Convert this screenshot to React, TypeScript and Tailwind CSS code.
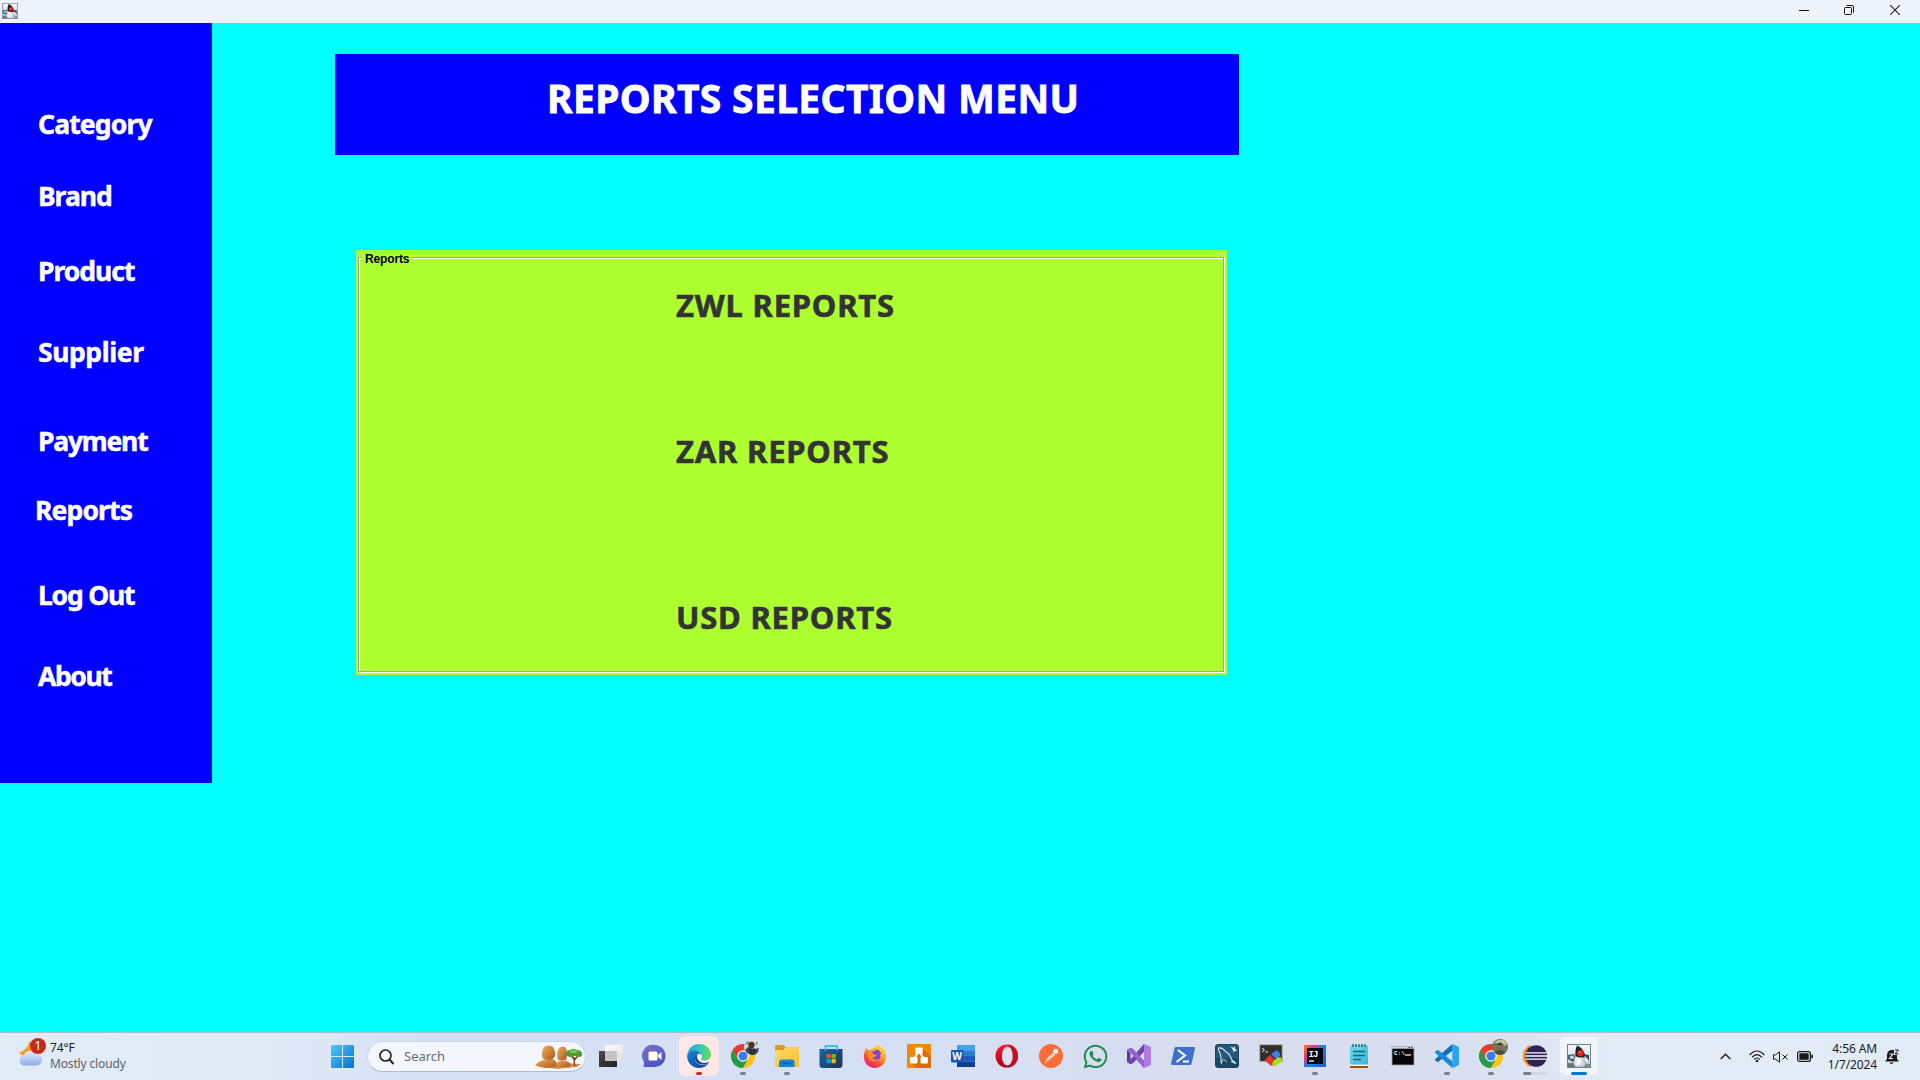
import React from "react";
import { FaWhatsapp } from "react-icons/fa";

type IconProps = { children: React.ReactNode };

function Icon({ children }: IconProps) {
  return (
    <svg width="24" height="24" viewBox="0 0 24 24" className="block overflow-visible">
      {children}
    </svg>
  );
}

function Duke({ size }: { size: number }) {
  return (
    <svg width={size} height={size} viewBox="0 0 24 24" className="block">
      <defs>
        <linearGradient id="dukeBg" x1="0" y1="0" x2="0" y2="1">
          <stop offset="0" stopColor="#f6f8fa" />
          <stop offset="1" stopColor="#c3cdd8" />
        </linearGradient>
        <linearGradient id="dukeBody" x1="0" y1="0" x2="1" y2="0">
          <stop offset="0" stopColor="#c9ccce" />
          <stop offset=".4" stopColor="#ffffff" />
          <stop offset="1" stopColor="#b4b8bb" />
        </linearGradient>
      </defs>
      <rect x=".5" y=".5" width="23" height="23" fill="url(#dukeBg)" stroke="#6c8299" />
      <path d="M1 11l6-1 2 5-3 3-5-3z" fill="#47596a" />
      <path d="M2.500 12l4-.5 1 3-4 .5z" fill="#b7d3e6" />
      <path d="M16 10l6 1v6l-5-2z" fill="#3f4d5a" />
      <path d="M1 19h5l3 4H1z" fill="#6c747b" />
      <path d="M18 20h5v3h-7z" fill="#858d94" />
      <path d="M6.500 20c0-4 1.500-7 3-9h7c1.500 3 2.500 6 2.500 10l-3 2-3-2-4 2z" fill="url(#dukeBody)" stroke="#8a8f94" strokeWidth=".5" />
      <path d="M17.500 12l4 4-1 3.500-3-3z" fill="#f5f5f5" stroke="#8a8f94" strokeWidth=".4" />
      <path d="M10 1.500C8.500 5 8 9 8.500 12l3 1.500h5L18 11C17 7 14 3 10 1.500z" fill="#1b1d20" />
      <circle cx="13.500" cy="9.300" r="3.200" fill="#e81c1c" />
      <circle cx="12.700" cy="8.300" r="1" fill="#ff7070" />
    </svg>
  );
}

const chromeArt = (
  <>
    <circle cx="12" cy="12" r="12" fill="#fbc116" />
    <path d="M1.600 6A12 12 0 0 1 22.400 6H12L6.800 15z" fill="#e33b2e" />
    <path d="M1.600 6A12 12 0 0 0 12 24l5.200-9L12 12 6.800 15z" fill="#229a48" />
    <path d="M22.400 6A12 12 0 0 1 12 24l5.200-9A6 6 0 0 0 12 6z" fill="#fcc31b" />
    <circle cx="12" cy="12" r="5.800" fill="#fff" />
    <circle cx="12" cy="12" r="4.600" fill="#3b7ded" />
  </>
);

const icons: { name: string; art: React.ReactNode; mark?: string; cell?: string }[] = [
  {
    name: "Task view",
    art: (
      <Icon>
        <defs>
          <linearGradient id="tv1" x1="0" y1="0" x2="1" y2="1">
            <stop offset="0" stopColor="#4b4b4b" />
            <stop offset="1" stopColor="#1f1f1f" />
          </linearGradient>
          <linearGradient id="tv2" x1="0" y1="0" x2="1" y2="1">
            <stop offset="0" stopColor="#fff" />
            <stop offset="1" stopColor="#dcdcdc" />
          </linearGradient>
        </defs>
        <rect x="0" y="7" width="18" height="16" fill="url(#tv1)" />
        <rect x="6" y="1" width="18" height="16" fill="url(#tv2)" />
        <rect x="6" y="7" width="12" height="10" fill="#c3c3c5" />
      </Icon>
    ),
  },
  {
    name: "Chat",
    art: (
      <Icon>
        <defs>
          <linearGradient id="chat" x1="0" y1="0" x2=".6" y2="1">
            <stop offset="0" stopColor="#8f6bb0" />
            <stop offset=".5" stopColor="#6263c9" />
            <stop offset="1" stopColor="#4c50c4" />
          </linearGradient>
        </defs>
        <path d="M12 1a11 11 0 1 1-1 22H.5l.5-5A11 11 0 0 1 12 1z" fill="url(#chat)" />
        <rect x="5.500" y="7.500" width="9" height="9" rx="1.500" fill="#fff" />
        <path d="M15 11l3.500-3v8L15 13z" fill="#fff" />
      </Icon>
    ),
  },
  {
    name: "Edge",
    mark: "w-1.5 bg-[#c42b1c]",
    cell: "bg-[#fde7e9]",
    art: (
      <Icon>
        <defs>
          <linearGradient id="edge1" x1="0" y1=".3" x2="1" y2=".4">
            <stop offset="0" stopColor="#209fd8" />
            <stop offset=".5" stopColor="#30c6c4" />
            <stop offset="1" stopColor="#68dd55" />
          </linearGradient>
          <linearGradient id="edge2" x1="0" y1="0" x2=".7" y2="1">
            <stop offset="0" stopColor="#1783cf" />
            <stop offset="1" stopColor="#104ca0" />
          </linearGradient>
        </defs>
        <path d="M.2 11C1 4.500 6 0 12.200 0 19 0 24 5 24 10.500c0 3.500-2.500 6-6 6-2.800 0-4-1-3.700-2 .6-1.200.9-2 .4-3.500C13.500 7.500 10 6 6.500 6.500 3.500 7 1.200 8.600.2 11z" fill="url(#edge1)" />
        <path d="M.2 11C2 7 7 5.300 10.500 7c2 1 3.300 2.300 4 3.800-3-2.400-6.500-.5-6.500 3.500 0 5.500 6.500 9 13.500 5C19.500 22.300 16 24 12 24 5 24-.4 18.200.2 11z" fill="url(#edge2)" />
        <path d="M8 13c-.8 6 6.500 10 13.700 6 .6-.4.200-1-.5-.7-5 2.200-11.700-.8-11.200-6.300.2-1 .5-1.500 1-2-1.600.4-2.700 1.500-3 3z" fill="#0b4c8e" />
      </Icon>
    ),
  },
  {
    name: "Chrome",
    mark: "w-1.5 bg-[#7b8088]",
    art: (
      <Icon>
        {chromeArt}
        <circle cx="21" cy="3" r="8" fill="#d9dde0" />
        <path d="M14 6l2 3 4 2h4l3-3 1-4-4 1-7-2z" fill="#3f4a52" />
        <circle cx="20.500" cy="1" r="3.200" fill="#4a3428" />
        <path d="M18 4.500l3 1 3-1.500 1 4-4 2.500-3-2z" fill="#29303c" />
        <path d="M14 0l3-3 1 1-2 3zM25-3l2 3-2 1z" fill="#76859b" />
      </Icon>
    ),
  },
  {
    name: "File Explorer",
    mark: "w-1.5 bg-[#7b8088]",
    art: (
      <Icon>
        <defs>
          <linearGradient id="folder" x1="0" y1="0" x2="1" y2="1">
            <stop offset="0" stopColor="#ffdc6b" />
            <stop offset="1" stopColor="#f9bc2c" />
          </linearGradient>
        </defs>
        <path d="M0 2.500Q0 1 1.500 1H8l2.500 2H23q1 0 1 1v4H0z" fill="#dc9b14" />
        <path d="M0 6h8l3-3h12q1 0 1 1v18q0 1-1 1H1q-1 0-1-1z" fill="url(#folder)" />
        <path d="M4 23v-5q0-2.500 2.500-2.500h10.500q2.500 0 2.500 2.500v5z" fill="#1683d4" />
        <rect x="7" y="18.500" width="9.500" height="1.700" rx=".8" fill="#0b5ba5" />
      </Icon>
    ),
  },
  {
    name: "Store",
    art: (
      <Icon>
        <defs>
          <linearGradient id="store" x1="0" y1="0" x2="1" y2="1">
            <stop offset="0" stopColor="#14669f" />
            <stop offset="1" stopColor="#223257" />
          </linearGradient>
        </defs>
        <path d="M6.500 7V2H18v5" fill="none" stroke="#38c2ef" strokeWidth="2" />
        <path d="M.5 5h23v15.500q0 3.500-3.500 3.500H4Q.5 24 .5 20.500z" fill="url(#store)" />
        <path d="M5.600 5h1.800v1.500H5.600zM17 5h1.800v1.500H17z" fill="#38c2ef" />
        <path d="M7.500 10h4.200v4.200H7.500z" fill="#f25022" />
        <path d="M12.500 10h4.200v4.200h-4.200z" fill="#7fba00" />
        <path d="M7.500 15h4.200v4.200H7.500z" fill="#00a4ef" />
        <path d="M12.500 15h4.200v4.200h-4.200z" fill="#ffb900" />
      </Icon>
    ),
  },
  {
    name: "Firefox",
    art: (
      <Icon>
        <defs>
          <linearGradient id="ff" x1=".8" y1="0" x2=".2" y2="1">
            <stop offset="0" stopColor="#fff046" />
            <stop offset=".4" stopColor="#ffa326" />
            <stop offset=".7" stopColor="#fc4a3f" />
            <stop offset="1" stopColor="#e01475" />
          </linearGradient>
        </defs>
        <path d="M3.200 3.500c.3 1.200.8 2 1.600 2.500 1-.5 2-.4 3 0 1-1.500 2.500-2 4.200-2-.2-.8 2-2.500 3.500-4.500.5 2 1.500 3 2.500 4 .5.300.8.500 1 .8V3c2.700 2 4.200 6 4.200 9.500C23.200 19 18.200 24 12 24S.8 19 .8 12.500c0-3 1-6 2.400-9z" fill="url(#ff)" />
        <circle cx="12" cy="12.200" r="5.300" fill="#7a42d5" />
        <path d="M5 9c2-1 4-1 6 1 1 1 2 1 3 1-1 2.500-3 2-4.500 2.500 1 2.500 4 3 7 .5-1 4-8 5-10.500.5C5 12.500 4.500 11 5 9z" fill="#ff8b25" />
        <path d="M12 6c3-1 6 1 6.500 5-2-2-2.500-2-4.500-3z" fill="#6547cf" />
      </Icon>
    ),
  },
  {
    name: "Diagrams",
    art: (
      <Icon>
        <rect width="24" height="24" fill="#f08705" />
        <path d="M15 4l9 8v12H10l-6-5z" fill="#df6c0c" />
        <path d="M11 9l-5 7M13 9l5 7" stroke="#fff" strokeWidth="2" />
        <rect x="8.300" y="3.500" width="7.400" height="6.500" rx="1" fill="#fff" />
        <rect x="3" y="13" width="7.500" height="6.500" rx="1" fill="#fff" />
        <rect x="13.500" y="13" width="7.500" height="6.500" rx="1" fill="#fff" />
      </Icon>
    ),
  },
  {
    name: "Word",
    art: (
      <Icon>
        <path d="M6 1h18v6H6z" fill="#3fa3ec" />
        <path d="M6 7h18v5H6z" fill="#2b7cd3" />
        <path d="M6 12h18v5.500H6z" fill="#185abd" />
        <path d="M6 17.500h18V23H6z" fill="#103f91" />
        <rect x="0" y="6" width="12.500" height="12.500" rx="1" fill="#1a56b4" />
        <text x="6.200" y="16" textAnchor="middle" fill="#fff" className="font-['Noto_Sans'] text-[10px] font-bold">W</text>
      </Icon>
    ),
  },
  {
    name: "Opera",
    art: (
      <Icon>
        <defs>
          <linearGradient id="op" x1="0" y1="0" x2="0" y2="1">
            <stop offset="0" stopColor="#ff1b2d" />
            <stop offset="1" stopColor="#a70014" />
          </linearGradient>
        </defs>
        <ellipse cx="11.800" cy="12" rx="11.300" ry="11.500" fill="url(#op)" />
        <path d="M12 .5c7 0 11 5.500 11 11.500s-4 11.500-11 11.500c5-1 6-7 6-11.500S17 1.500 12 .5z" fill="#c4101f" />
        <ellipse cx="12.300" cy="12" rx="5.400" ry="9.600" fill="#dbe1f1" />
      </Icon>
    ),
  },
  {
    name: "Postman",
    art: (
      <Icon>
        <circle cx="12" cy="12" r="12" fill="#ff6c37" />
        <path d="M5.500 19.500l2.500-5 6-5.500 2 2-6.500 5.500z" fill="#fff" />
        <circle cx="16.700" cy="7.200" r="2.500" fill="#fff" />
        <path d="M5.500 19l8.500-8" stroke="#ff6c37" strokeWidth=".8" />
      </Icon>
    ),
  },
  { name: "WhatsApp", art: <FaWhatsapp className="h-[27px] w-[27px] text-[#1c8c50]" /> },
  {
    name: "Visual Studio",
    art: (
      <Icon>
        <path d="M17 0l7 3v18l-7 3z" fill="#b07be6" />
        <path d="M17 0L3.500 15.500 0 17.500V7l1-1 2 1.500L17 24v-7L6 5 3.500 4 0 6v12l3.500 2L6 19 17 7.500z" fill="#63409c" />
        <path d="M17 0v7.500L6 19l-2.500 1L0 18l3-1z" fill="#7443b0" />
        <path d="M6 5l11 12v7L3 8 0 6l3.500-2z" fill="#9563d4" />
        <path d="M0 6l3.500 3v6.500L0 18z" fill="#5b3a92" />
      </Icon>
    ),
  },
  {
    name: "PowerShell",
    art: (
      <Icon>
        <path d="M5 3h18q1.200 0 1 1.200l-3.500 15.600q-.3 1.200-1.500 1.200H1q-1.200 0-1-1.200L3.500 4.200Q3.800 3 5 3z" fill="#3f70c9" />
        <path d="M7 6l7 5.500L5.500 18" fill="none" stroke="#fff" strokeWidth="2.200" />
        <path d="M12 17.500h6" stroke="#fff" strokeWidth="2" />
      </Icon>
    ),
  },
  {
    name: "Workbench",
    art: (
      <Icon>
        <rect x=".5" y=".5" width="23" height="23" rx="2.500" fill="#21587c" stroke="#1b4660" />
        <path d="M1 14h22v7q0 2-2 2H3q-2 0-2-2z" fill="#1c4868" />
        <path d="M6.500 19.500c-1.500-3 .5-5.500-1-9C4.500 8 3 6 3.500 4c3-.8 5 .8 7 3.500 3 1.500 5 4.500 6 8l4.500 4-5-2" fill="none" stroke="#dbe8f0" strokeWidth="1.100" />
        <path d="M6.500 19.500c.2-2 1-3.500 2.200-4.500 1.500 1 2 2.500 3 3" fill="none" stroke="#dbe8f0" strokeWidth="1" />
        <path d="M15.500 2.500l3 1.200.8-1.700 1 3 2 1.700-2.300.2-1.300 1.600-.7-2.500z" fill="#e8eef2" />
      </Icon>
    ),
  },
  {
    name: "Git terminal",
    art: (
      <Icon>
        <rect x=".6" y=".6" width="22.800" height="17" fill="#2e2e2e" stroke="#b6b6ae" strokeWidth="1.200" />
        <path d="M3 4l2.500 2L3 8M6.500 8H9" fill="none" stroke="#fff" strokeWidth="1" />
        <path d="M5.500 16l5.500-5 7 7-2.500 3.500h-4z" fill="#e5352c" />
        <path d="M12 10l6-4 3.500 4-2 5-3.500-1z" fill="#3c7ff0" />
        <path d="M14.500 17l3.500-3 4-1 1 4-6.500 5.500-3.500-2z" fill="#a5e316" />
      </Icon>
    ),
  },
  {
    name: "IntelliJ",
    mark: "w-1.5 bg-[#7b8088]",
    art: (
      <Icon>
        <defs>
          <linearGradient id="ij" x1="0" y1="0" x2="1" y2=".8">
            <stop offset="0" stopColor="#fc801d" />
            <stop offset=".3" stopColor="#e8347a" />
            <stop offset=".55" stopColor="#1580f2" />
            <stop offset="1" stopColor="#245edc" />
          </linearGradient>
        </defs>
        <rect x="1" y="1" width="22" height="22" fill="url(#ij)" />
        <rect x="4" y="4" width="16" height="16" fill="#080610" />
        <text x="5.500" y="12.500" fill="#fff" className="font-['Liberation_Mono'] text-[9px] font-bold tracking-[-1px]">IJ</text>
        <path d="M6 17h5" stroke="#fff" strokeWidth="1.300" />
      </Icon>
    ),
  },
  {
    name: "Notepad",
    art: (
      <Icon>
        <defs>
          <linearGradient id="np" x1="0" y1="0" x2="1" y2="1">
            <stop offset="0" stopColor="#70dcec" />
            <stop offset="1" stopColor="#38b4d8" />
          </linearGradient>
        </defs>
        <path d="M3 20h18v4H3z" fill="#a9500d" />
        <path d="M3 20h18v2H3z" fill="#f6efe8" />
        <rect x="3" y="1.500" width="18" height="19" rx="1" fill="url(#np)" />
        <path d="M6 0v3M9 0v3M12 0v3M15 0v3M18 0v3" stroke="#155a73" strokeWidth="1.300" />
        <path d="M6 7.500h12M6 11.500h12M6 15.500h8" stroke="#12637e" strokeWidth="1.300" />
      </Icon>
    ),
  },
  {
    name: "Command Prompt",
    art: (
      <Icon>
        <rect x="1" y="2.500" width="22" height="18.500" fill="#070707" stroke="#9fa2a6" strokeWidth=".8" />
        <path d="M1 2.500h22v2.200H1z" fill="#d4d7da" />
        <path d="M17.500 3.500h1.500M20 3.500h1.500" stroke="#444" />
        <text x="3" y="11" fill="#fff" className="font-['Liberation_Mono'] text-[6px] font-bold">C:\</text>
        <path d="M14 11h6" stroke="#fff" strokeWidth="1.200" />
      </Icon>
    ),
  },
  {
    name: "VS Code",
    mark: "w-1.5 bg-[#7b8088]",
    art: (
      <Icon>
        <path d="M17.300 0L24 3v18l-6.700 3z" fill="#2aa6ee" />
        <path d="M17.300 0v6.800L2.800 18.300 0 16.200v-1z" fill="#0e70b8" />
        <path d="M17.300 24v-6.800L2.800 5.700 0 7.800v1z" fill="#1a8ad6" />
      </Icon>
    ),
  },
  {
    name: "Chrome profile",
    mark: "w-1.5 bg-[#7b8088]",
    art: (
      <Icon>
        {chromeArt}
        <circle cx="21" cy="3" r="8" fill="#6f7a55" />
        <path d="M15-1l4-3 6 0 3 4-2 2-4-2z" fill="#b9c49b" />
        <circle cx="21" cy="2.500" r="3.200" fill="#8b6750" />
        <path d="M17.500 1q3.500-5 7 0z" fill="#30363a" />
        <path d="M15.500 8.500q5.500-5 11 0-5.500 4.500-11 0z" fill="#424d4c" />
      </Icon>
    ),
  },
  {
    name: "Eclipse",
    mark: "w-6 bg-[linear-gradient(90deg,#7b8088_33%,#d3dae5_33%)]",
    art: (
      <Icon>
        <path d="M8 .8A11.700 11.700 0 0 0 8 23.200L7 20Q3 12 7 4z" fill="#f7941e" />
        <circle cx="13.200" cy="12" r="10.800" fill="#2c2255" />
        <path d="M3 8.800h20.500M2.500 12H24M3 15.200h20.500" stroke="#fff" strokeWidth="1.300" />
      </Icon>
    ),
  },
  { name: "Java", mark: "w-4 bg-[#0078d4]", cell: "bg-[#f0f4fb] shadow-[inset_0_0_0_1px_#e3e9f3]", art: <Duke size={24} /> },
];

const menu = [
  { label: "Category", place: "tracking-[-0.85px]" },
  { label: "Brand", place: "mt-10 tracking-[-1px]" },
  { label: "Product", place: "mt-[43px] tracking-[-1px]" },
  { label: "Supplier", place: "mt-[49px] tracking-[-0.4px]" },
  { label: "Payment", place: "mt-[57px] tracking-[-1.2px]" },
  { label: "Reports", place: "mt-[37px] -ml-[3px] tracking-[-0.85px]" },
  { label: "Log Out", place: "mt-[53px] tracking-[-1.2px]" },
  { label: "About", place: "mt-[49px] tracking-[-1.4px]" },
];

export default function App() {
  return (
    <div className="flex h-[1080px] w-[1920px] flex-col overflow-hidden bg-[#00ffff] font-['Noto_Sans',sans-serif]">
      <header className="flex h-[23px] shrink-0 items-start justify-between bg-[#eef3fb]">
        <div className="pt-[3px] pl-0.5"><Duke size={16} /></div>
        <div className="flex h-5 items-center">
          <svg width="10" height="10" className="mr-[35px]"><path d="M0 5.500h10" stroke="#111" /></svg>
          <svg width="10" height="10" className="mr-9 overflow-visible" fill="none" stroke="#111">
            <rect x=".5" y="2.500" width="7" height="7" rx="1" />
            <path d="M2.500.5H8q1.500 0 1.500 1.500v5.500" />
          </svg>
          <svg width="10" height="10" className="mr-5"><path d="M0 0l10 10M10 0L0 10" stroke="#222" strokeWidth="1.100" /></svg>
        </div>
      </header>

      <main className="flex flex-1 items-start">
        <nav className="flex h-[760px] w-[212px] flex-col items-start bg-[#0000ff] pt-[85px] pl-[38px] text-[26.500px] leading-8 font-bold text-white [-webkit-text-stroke:0.5px_#fff]">
          {menu.map((i) => (
            <button key={i.label} className={i.place}>{i.label}</button>
          ))}
        </nav>
        <div className="pt-[31px] pl-[123px]">
          <div className="h-[101px] w-[904px] bg-[#0000ff] pt-[19px] pl-[212px]">
            <h1 className="w-max text-[39px] leading-[50px] font-bold tracking-[0.36px] text-white [-webkit-text-stroke:0.8px_#fff]">REPORTS SELECTION MENU</h1>
          </div>
          <section className="mt-[95px] ml-[21px] h-[425px] w-[871px] bg-[#adff2f] pt-[7px] pl-0.5">
            <div className="relative h-[415px] w-[866px] border border-[#a0a0a0] pt-[29px] pl-[317px] shadow-[1px_1px_0_#fff,inset_1px_1px_0_#fff]">
              <span className="absolute -top-[7px] left-[3px] bg-[#adff2f] px-[3px] font-['Liberation_Sans'] text-xs leading-4 font-bold tracking-[-0.15px] text-black">Reports</span>
              <div className="flex flex-col items-start text-[31px] leading-9 font-bold tracking-[0.8px] text-[#333] [-webkit-text-stroke:0.6px_#333]">
                <button>ZWL REPORTS</button>
                <button className="mt-[110px]">ZAR REPORTS</button>
                <button className="mt-[130px]">USD REPORTS</button>
              </div>
            </div>
          </section>
        </div>
      </main>

      <footer className="flex h-12 shrink-0 items-start border-t border-[#b5b9c0] bg-[linear-gradient(90deg,#e2ecf7_0%,#e1ebf7_14%,#d6e0f5_22%,#d6e0f4_48%,#d8ddf0_60%,#d8def0_75%,#e2ebf6_84%,#e2ecf7_100%)]">
        <div className="flex w-[331px] pt-[5px] pl-[18px]">
          <svg width="29" height="30" viewBox="0 0 29 30">
            <defs>
              <linearGradient id="cloud" x1="0" y1="0" x2="0" y2="1">
                <stop offset="0" stopColor="#e6effd" />
                <stop offset="1" stopColor="#8cacec" />
              </linearGradient>
            </defs>
            <path d="M11 4q-1 7-10 11 3 4 8 2l9-4V4z" fill="#f7a12a" />
            <path d="M6 27.500a5.200 5.200 0 0 1 0-10.200 6.500 6.500 0 0 1 12-.8A5.500 5.500 0 0 1 19 27.500z" fill="url(#cloud)" />
            <circle cx="20" cy="8" r="8" fill="#c42b1c" />
            <text x="20" y="12.300" textAnchor="middle" fill="#fff" className="text-xs">1</text>
          </svg>
          <div className="pt-0.5 pl-[3px] text-xs leading-4 tracking-[-0.15px] whitespace-nowrap">
            <div className="text-[#1a1a1a]">74°F</div>
            <div className="text-[#5c6168]">Mostly cloudy</div>
          </div>
        </div>
        <svg width="23" height="23" viewBox="0 0 23 23" className="mt-3">
          <defs>
            <linearGradient id="win" x1="0" y1="0" x2="1" y2="1">
              <stop offset="0" stopColor="#4cc9fa" />
              <stop offset="1" stopColor="#0573d1" />
            </linearGradient>
          </defs>
          <path d="M1 0h10v11H0V1q0-1 1-1zM12 0h10q1 0 1 1v10H12zM0 12h11v11H1q-1 0-1-1zM12 12h11v10q0 1-1 1H12z" fill="url(#win)" />
        </svg>
        <div className="mt-2 ml-[13px] flex h-[31px] w-[219px] items-center rounded-full border border-b-[#b3bccd] border-[#cbd4e6] bg-[#f4f7fd]">
          <svg width="15" height="16" viewBox="0 0 15 16" fill="none" stroke="#222" className="ml-[11px]">
            <circle cx="6.500" cy="6.500" r="5.500" strokeWidth="1.700" />
            <path d="M10.500 10.500l4 4.500" strokeWidth="2" />
          </svg>
          <span className="ml-[10px] text-[13px] text-[#666a72]">Search</span>
          <svg width="48" height="26" viewBox="0 0 48 26" className="mr-0.5 ml-auto">
            <defs>
              <linearGradient id="rock" x1="0" y1="0" x2="1" y2="1">
                <stop offset="0" stopColor="#f3b15c" />
                <stop offset="1" stopColor="#a9571c" />
              </linearGradient>
            </defs>
            <path d="M10 23l18-4 18 1-4 3-20 2z" fill="#d8904a" />
            <path d="M0 21q3-3 8-5l10-1q5 3 4 8l-11 1Q3 23 0 21z" fill="url(#rock)" />
            <path d="M21 23q0-6 6-7 8 1 9 5l-3 2z" fill="url(#rock)" />
            <path d="M9 3q5-3 9 0 3 5 2 9-2 4-7 4-6 0-6-5 0-5 2-8z" fill="url(#rock)" />
            <path d="M24 4q4-3 7 0 2 6 0 12h-8q-2-6 1-12z" fill="url(#rock)" />
            <path d="M39.500 22l-.5-9M39.500 16l4-5M39 15l-4-4" fill="none" stroke="#7a3b1a" strokeWidth="1.400" />
            <path d="M31 9q1-3 4-3 3-2 7 0 4 0 5 3 1 4-3 4l-4-1-4 1q-5 0-5-4z" fill="#4f9a35" />
            <path d="M34 7.500q4-2.500 8-.5 1 2-3 2t-5-1.500z" fill="#83c454" />
          </svg>
        </div>

        <div className="ml-[3px] flex">
          {icons.map((i) => (
            <div key={i.name} title={i.name} className="flex h-[47px] w-11 justify-center pt-[3px]">
              <div className={`flex h-10 w-10 shrink-0 flex-col items-center rounded-md ${i.cell ?? ""}`}>
                <div className="flex h-9 shrink-0 items-center pt-1">{i.art}</div>
                {i.mark && <div className={`h-[3px] shrink-0 rounded-full ${i.mark}`} />}
              </div>
            </div>
          ))}
        </div>

        <div className="ml-auto flex h-[47px] items-center">
          <svg width="11" height="7" className="mr-[18px]" fill="none" stroke="#1a1a1a" strokeWidth="1.400"><path d="M.7 6l4.800-4.800L10.300 6" /></svg>
          <svg width="16" height="13" viewBox="0 0 16 13" className="mr-2" fill="none" stroke="#1a1a1a" strokeWidth="1.200">
            <path d="M.7 5q7.300-8 14.600 0M3 7.300q5-5.500 10 0M5.300 9.500q2.700-3 5.400 0" />
            <circle cx="8" cy="11" r="1.300" fill="#1a1a1a" stroke="none" />
          </svg>
          <svg width="16" height="12" viewBox="0 0 16 12" className="mr-2" fill="none" stroke="#1a1a1a">
            <path d="M.5 3.800h2.200L6.500.8v10.400L2.700 8.200H.5zM9.500 3.500l5 5M14.500 3.500l-5 5" />
          </svg>
          <svg width="16" height="11" viewBox="0 0 16 11" className="mr-[15px]">
            <rect x=".6" y=".6" width="12.800" height="9.800" rx="2" fill="none" stroke="#1a1a1a" strokeWidth="1.200" />
            <rect x="2.300" y="2.300" width="9.400" height="6.400" rx=".5" fill="#1a1a1a" />
            <path d="M14.300 3.500h.7q1 0 1 2t-1 2h-.7z" fill="#1a1a1a" />
          </svg>
          <div className="text-right text-xs leading-4 tracking-[-0.12px] text-[#1a1a1a]">
            <div>4:56 AM</div>
            <div>1/7/2024</div>
          </div>
          <svg width="15" height="16" viewBox="0 0 15 16" className="mr-5 ml-2">
            <path d="M0 12.500l2-2.500V6q.5-5 5-5h5v9l2 2.500zM4.500 13.500h4q-2 3-4 0z" fill="#1a1a1a" />
            <path d="M4.500 5H8l-3.500 4.500H8" fill="none" stroke="#e6eef8" strokeWidth="1.200" />
            <path d="M9 0h6v6H9z" fill="#e2ecf7" />
            <path d="M10 1h3.500L10 4.800h3.500" fill="none" stroke="#1a1a1a" />
          </svg>
        </div>
      </footer>
    </div>
  );
}
